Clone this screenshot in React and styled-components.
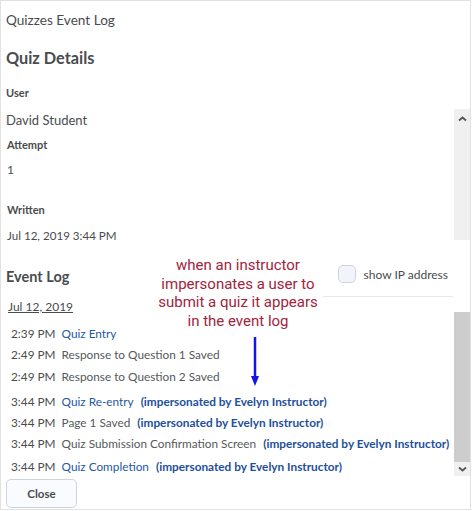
import React from "react";
import styled, { createGlobalStyle } from "styled-components";

const GlobalStyle = createGlobalStyle`
  body {
    margin: 0;
    background: #ffffff;
    font-family: Lato, "Open Sans", sans-serif;
    color: #494c4e;
  }
`;

const Frame = styled.div`
  width: 471px;
  height: 510px;
  box-sizing: border-box;
  border: 1px solid #e2e2e2;
  display: flex;
  flex-direction: column;
  overflow: hidden;
`;

const Title = styled.div`
  margin: 9px 0 0 5px;
  font-size: 13.6px;
  line-height: 20px;
`;

const SectionTitle = styled.h2`
  margin: 18px 0 0 5px;
  font-size: 16.3px;
  line-height: 20px;
  font-weight: 700;
`;

const Label = styled.div`
  margin: ${(p) => p.$top || 0}px 0 0 ${(p) => p.$left || 5}px;
  font-size: 11px;
  line-height: 16px;
  font-weight: 700;
`;

const Value = styled.div`
  margin: ${(p) => p.$top || 0}px 0 0 ${(p) => p.$left || 5}px;
  font-size: ${(p) => p.$size || 12}px;
  line-height: 18px;
`;

const ScrollRow = styled.div`
  display: flex;
  margin-top: ${(p) => p.$top}px;
  height: ${(p) => p.$height}px;
`;

const ScrollContent = styled.div`
  flex: 1;
  min-width: 0;
`;

const Track = styled.div`
  width: 16px;
  margin-top: ${(p) => p.$top || 0}px;
  height: ${(p) => p.$height}px;
  background: #f0f0f0;
  display: flex;
  flex-direction: column;
`;

const ArrowBox = styled.div`
  height: ${(p) => p.$height || 14}px;
  display: flex;
  align-items: center;
  justify-content: center;
  flex-shrink: 0;
`;

const Thumb = styled.div`
  flex: 1;
  background: #cdcdcd;
`;

const EventHeader = styled.div`
  position: relative;
  margin-top: 20px;
  height: 34px;
  display: flex;
  align-items: center;
  justify-content: space-between;
  padding: 0 22px 0 5px;
`;

const HeaderTitle = styled.div`
  font-size: 14.5px;
  font-weight: 700;
  line-height: 18px;
`;

const CheckLabel = styled.label`
  display: flex;
  align-items: center;
  gap: 8px;
  font-size: 12px;
  margin-top: -6px;
`;

const Box = styled.span`
  width: 16px;
  height: 16px;
  border: 1px solid #cdd5dc;
  border-radius: 5px;
  background: #f1f5fb;
`;

const Note = styled.div`
  position: absolute;
  top: -4px;
  left: 137px;
  width: 200px;
  text-align: center;
  font-family: Roboto, "Liberation Sans", sans-serif;
  font-size: 15px;
  line-height: 18.5px;
  color: #a3233c;
`;

const NoteArrow = styled.svg`
  position: absolute;
  top: 77px;
  left: 249px;
`;

const Separator = styled.div`
  margin: 2px 17px 0 322px;
  border-top: 1px solid #e9e9e9;
`;

const DateLink = styled.div`
  margin-left: 7px;
  font-size: 12px;
  line-height: 16px;
  text-decoration: underline;
`;

const Row = styled.div`
  margin-top: ${(p) => p.$top || 0}px;
  padding-left: 10px;
  font-size: 11.8px;
  line-height: 21px;
  white-space: nowrap;
`;

const Time = styled.span`
  color: #494c4e;
  margin-right: 6px;
`;

const EventName = styled.span`
  color: ${(p) => (p.$link ? "#1f58a5" : "#55595c")};
`;

const Impersonated = styled.span`
  margin-left: 7px;
  color: #1d4f9b;
  font-weight: 700;
`;

const Footer = styled.div`
  margin: 2px 0 0 5px;
`;

const CloseButton = styled.button`
  width: 71px;
  height: 29px;
  border: 1px solid #cdd5dc;
  border-radius: 5px;
  background: #f9fbff;
  color: #494c4e;
  font-family: Lato, sans-serif;
  font-size: 11.5px;
  font-weight: 700;
`;

const Chevron = ({ down }) => (
  <svg width="9" height="6" viewBox="0 0 9 6">
    <path
      d={down ? "M1 1.5 L4.5 4.5 L8 1.5" : "M1 4.5 L4.5 1.5 L8 4.5"}
      fill="none"
      stroke="#555"
      strokeWidth="1.8"
    />
  </svg>
);

const events = [
  { time: "2:39 PM", name: "Quiz Entry", link: true },
  { time: "2:49 PM", name: "Response to Question 1 Saved" },
  { time: "2:49 PM", name: "Response to Question 2 Saved", top: 1 },
  { time: "3:44 PM", name: "Quiz Re-entry", link: true, imp: true, top: 4 },
  { time: "3:44 PM", name: "Page 1 Saved", imp: true },
  { time: "3:44 PM", name: "Quiz Submission Confirmation Screen", imp: true },
  { time: "3:44 PM", name: "Quiz Completion", link: true, imp: true, top: 2 },
];

export default function App() {
  return (
    <>
      <GlobalStyle />
      <Frame>
        <Title>Quizzes Event Log</Title>
        <SectionTitle>Quiz Details</SectionTitle>
        <Label $top={17}>User</Label>
        <ScrollRow $top={8} $height={131}>
          <ScrollContent>
            <Value $top={2} $size={13}>David Student</Value>
            <Label $top={8} $left={6}>Attempt</Label>
            <Value $top={8} $left={6}>1</Value>
            <Label $top={23} $left={6}>Written</Label>
            <Value $top={9} $left={6} $size={11.6}>Jul 12, 2019 3:44 PM</Value>
          </ScrollContent>
          <Track $height={131}>
            <ArrowBox $height={20}>
              <Chevron />
            </ArrowBox>
          </Track>
        </ScrollRow>

        <EventHeader>
          <HeaderTitle>Event Log</HeaderTitle>
          <CheckLabel>
            <Box />
            show IP address
          </CheckLabel>
          <Note>
            when an instructor
            <br />
            impersonates a user to
            <br />
            submit a quiz it appears
            <br />
            in the event log
          </Note>
          <NoteArrow width="10" height="49" viewBox="0 0 10 49">
            <line x1="5" y1="0" x2="5" y2="40" stroke="#1414e8" strokeWidth="2.5" />
            <polygon points="1,39 9,39 5,49" fill="#1414e8" />
          </NoteArrow>
        </EventHeader>
        <Separator />

        <ScrollRow $top={2} $height={178}>
          <ScrollContent>
            <DateLink>Jul 12, 2019</DateLink>
            {events.map((e, i) => (
              <Row key={i} $top={(i === 0 ? 8 : 0) + (e.top || 0)}>
                <Time>{e.time}</Time>
                <EventName $link={e.link}>{e.name}</EventName>
                {e.imp && <Impersonated>(impersonated by Evelyn Instructor)</Impersonated>}
              </Row>
            ))}
          </ScrollContent>
          <Track $top={13} $height={164}>
            <Thumb />
            <ArrowBox>
              <Chevron down />
            </ArrowBox>
          </Track>
        </ScrollRow>

        <Footer>
          <CloseButton>Close</CloseButton>
        </Footer>
      </Frame>
    </>
  );
}
